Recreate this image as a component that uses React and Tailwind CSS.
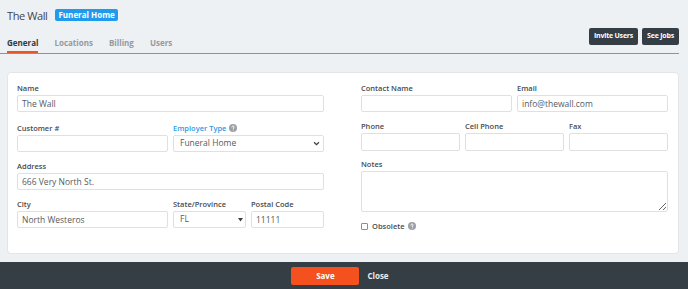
import React from 'react';

const HelpIcon = () => (
    <svg width="8" height="8" viewBox="0 0 16 16" className="inline-block ml-[3px] align-[-1px]">
        <circle cx="8" cy="8" r="8" fill="#9aa0a5" />
        <path d="M5.8 6.2c0-1.3 1-2.2 2.3-2.2s2.2.8 2.2 2c0 1.5-1.8 1.7-1.8 3.1" stroke="#fff" strokeWidth="1.8" fill="none" strokeLinecap="round" />
        <circle cx="8.5" cy="12" r="1.1" fill="#fff" />
    </svg>
);

const Label = ({ children, blue }) => (
    <div className={`h-[13px] leading-[13px] text-[7.5px] font-semibold ${blue ? 'text-[#2d9be8]' : 'text-[#464b50]'}`}>
        {children}
    </div>
);

const inputCls = "block w-full h-[17px] border border-[#dde1e4] rounded-[2px] bg-white px-[4px] text-[8.5px] text-[#555b60] outline-none";

const Field = ({ label, value = '', className = '', h = 'h-[17px]' }) => (
    <div className={className}>
        <Label>{label}</Label>
        <input className={`${inputCls} ${h}`} defaultValue={value} readOnly />
    </div>
);

const App = () => {
    return (
        <div className="w-[688px] h-[289px] bg-[#eef1f3] flex flex-col font-['Open_Sans',sans-serif] overflow-hidden">
            {/* header */}
            <div className="flex items-center pl-[7px] pt-[8px] h-[22px]">
                <span className="text-[11px] text-[#3f4449] leading-none tracking-[-0.4px]">The Wall</span>
                <span className="ml-[8px] bg-[#1e9bef] text-white text-[8px] font-bold rounded-[2px] px-[3px] h-[12px] leading-[12px]">Funeral Home</span>
            </div>

            {/* tabs */}
            <div className="flex items-end justify-between mr-[9px] mt-[6px] border-b border-[#8e9397] h-[26px]">
                <div className="flex pl-[7px] gap-[16px] text-[8px] font-bold">
                    <div className="text-[#34393d] border-b-2 border-[#e8562a] pb-[3px] leading-[11px]">General</div>
                    <div className="text-[#959a9e] pb-[5px] leading-[11px]">Locations</div>
                    <div className="text-[#959a9e] pb-[5px] leading-[11px]">Billing</div>
                    <div className="text-[#959a9e] pb-[5px] leading-[11px]">Users</div>
                </div>
                <div className="flex gap-[4px] self-start">
                    <button className="h-[17px] px-[5px] bg-[#343e44] text-white text-[7px] font-bold rounded-[2px] tracking-[-0.2px]">Invite Users</button>
                    <button className="h-[17px] px-[5px] bg-[#343e44] text-white text-[7px] font-bold rounded-[2px] tracking-[-0.2px]">See Jobs</button>
                </div>
            </div>

            {/* card */}
            <div className="mx-[7px] mr-[9px] mt-[18px] h-[182px] bg-white border border-[#e2e6e9] rounded-[4px] flex pl-[9px] pr-[10px] pt-[9px] gap-[37px]">
                {/* left column */}
                <div className="w-[307px] flex flex-col">
                    <Field label="Name" value="The Wall" />
                    <div className="flex gap-[5px] mt-[10px]">
                        <Field label="Customer #" className="w-[151px]" />
                        <div className="w-[151px]">
                            <Label blue>Employer Type<HelpIcon /></Label>
                            <div className="relative">
                                <select className={`${inputCls} appearance-none pl-[6px]`} defaultValue="Funeral Home">
                                    <option>Funeral Home</option>
                                </select>
                                <svg width="7" height="7" viewBox="0 0 10 10" className="absolute right-[4px] top-[5px] pointer-events-none">
                                    <path d="M1.5 3.2 5 6.7l3.5-3.5" stroke="#3a3f43" strokeWidth="1.8" fill="none" />
                                </svg>
                            </div>
                        </div>
                    </div>
                    <Field label="Address" value="666 Very North St." className="mt-[8px]" />
                    <div className="flex gap-[5px] mt-[8px]">
                        <Field label="City" value="North Westeros" className="w-[151px]" />
                        <div className="w-[73px]">
                            <Label>State/Province</Label>
                            <div className="relative">
                                <select className={`${inputCls} appearance-none pl-[6px]`} defaultValue="FL">
                                    <option>FL</option>
                                </select>
                                <svg width="5" height="4" viewBox="0 0 10 8" className="absolute right-[3px] top-[7px] pointer-events-none">
                                    <path d="M0 0h10L5 7z" fill="#3a3f43" />
                                </svg>
                            </div>
                        </div>
                        <Field label="Postal Code" value="11111" className="w-[73px]" />
                    </div>
                </div>

                {/* right column */}
                <div className="w-[307px] flex flex-col">
                    <div className="flex gap-[5px]">
                        <Field label="Contact Name" className="w-[151px]" />
                        <Field label="Email" value="info@thewall.com" className="w-[151px]" />
                    </div>
                    <div className="flex gap-[5px] mt-[8px]">
                        <Field label="Phone" className="w-[99px]" h="h-[18px]" />
                        <Field label="Cell Phone" className="w-[99px]" h="h-[18px]" />
                        <Field label="Fax" className="w-[99px]" h="h-[18px]" />
                    </div>
                    <div className="mt-[7px]">
                        <Label>Notes</Label>
                        <textarea className="block w-full h-[41px] border border-[#dde1e4] rounded-[2px] bg-white px-[4px] text-[8.5px] outline-none" readOnly />
                    </div>
                    <label className="flex items-center mt-[9px] text-[7.5px] font-semibold text-[#464b50] leading-[10px]">
                        <span className="w-[7px] h-[7px] border border-[#8a8f93] rounded-[1px] bg-white mr-[4px]" />
                        Obsolete<HelpIcon />
                    </label>
                </div>
            </div>

            {/* footer */}
            <div className="mt-auto h-[27px] bg-[#343e44] flex items-center justify-center pr-[8px]">
                <button className="w-[68px] h-[18px] bg-[#f4511e] text-white text-[8px] font-bold rounded-[2px]">Save</button>
                <button className="ml-[8px] text-[#e8ebed] text-[8px] font-bold">Close</button>
            </div>
        </div>
    );
};

export default App;
